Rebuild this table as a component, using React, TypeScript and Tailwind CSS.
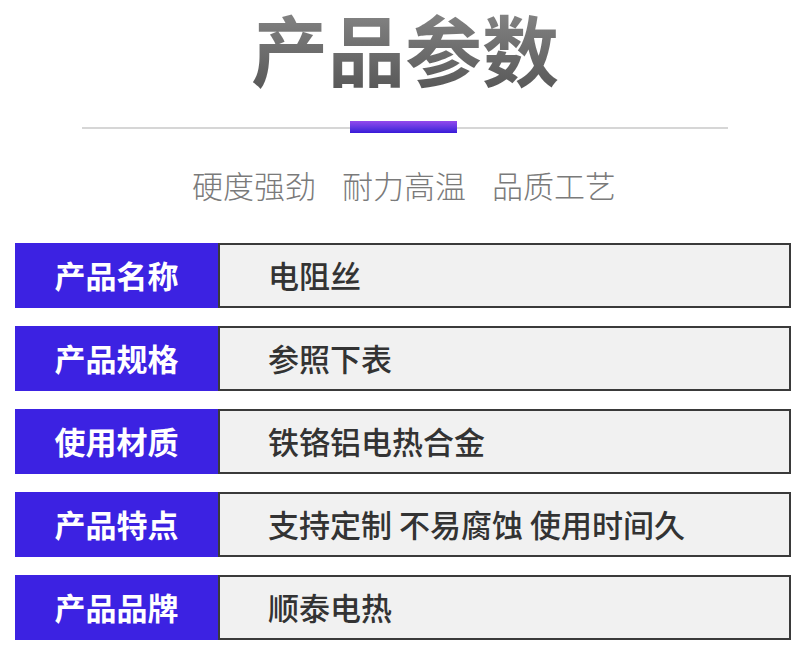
const rows = [
  { label: '产品名称', value: '电阻丝' },
  { label: '产品规格', value: '参照下表' },
  { label: '使用材质', value: '铁铬铝电热合金' },
  { label: '产品特点', value: '支持定制 不易腐蚀 使用时间久' },
  { label: '产品品牌', value: '顺泰电热' },
]

export default function App() {
  return (
    <div className="w-[800px] h-[653px] bg-white overflow-hidden font-['Noto_Sans_CJK_SC',sans-serif]">
      {/* Heading */}
      <div className="flex justify-center pl-[10px]">
        <h1 className="px-[4px] text-[77px] leading-[96px] font-bold bg-gradient-to-b from-[#8a8a8a] to-[#555555] bg-clip-text text-transparent">
          产品参数
        </h1>
      </div>

      {/* Divider */}
      <div className="relative ml-[82px] mr-[72px] mt-[31px] h-[2px] bg-[#d6d6d6]">
        <div className="absolute left-[268px] top-[-6px] w-[107px] h-[12px] bg-gradient-to-b from-[#9448ec] to-[#3818d8]" />
      </div>

      {/* Sub heading */}
      <div className="flex justify-center gap-[26px] mt-[36px] pl-[8px] text-[31px] leading-[40px] font-light text-[#7a7a7a]">
        <span>硬度强劲</span>
        <span>耐力高温</span>
        <span>品质工艺</span>
      </div>

      {/* Params */}
      <div className="flex flex-col gap-[18px] mt-[38px] pl-[15px] pr-[9px]">
        {rows.map((row) => (
          <div key={row.label} className="flex h-[65px]">
            <div className="w-[203px] shrink-0 bg-[#3c22e2] flex items-center justify-center text-white text-[31px] font-bold">
              {row.label}
            </div>
            <div className="flex-1 flex items-center pl-[48px] bg-[#f1f1f1] border-2 border-[#3a3a3a] text-[#333] text-[31px] font-medium">
              {row.value}
            </div>
          </div>
        ))}
      </div>
    </div>
  )
}
